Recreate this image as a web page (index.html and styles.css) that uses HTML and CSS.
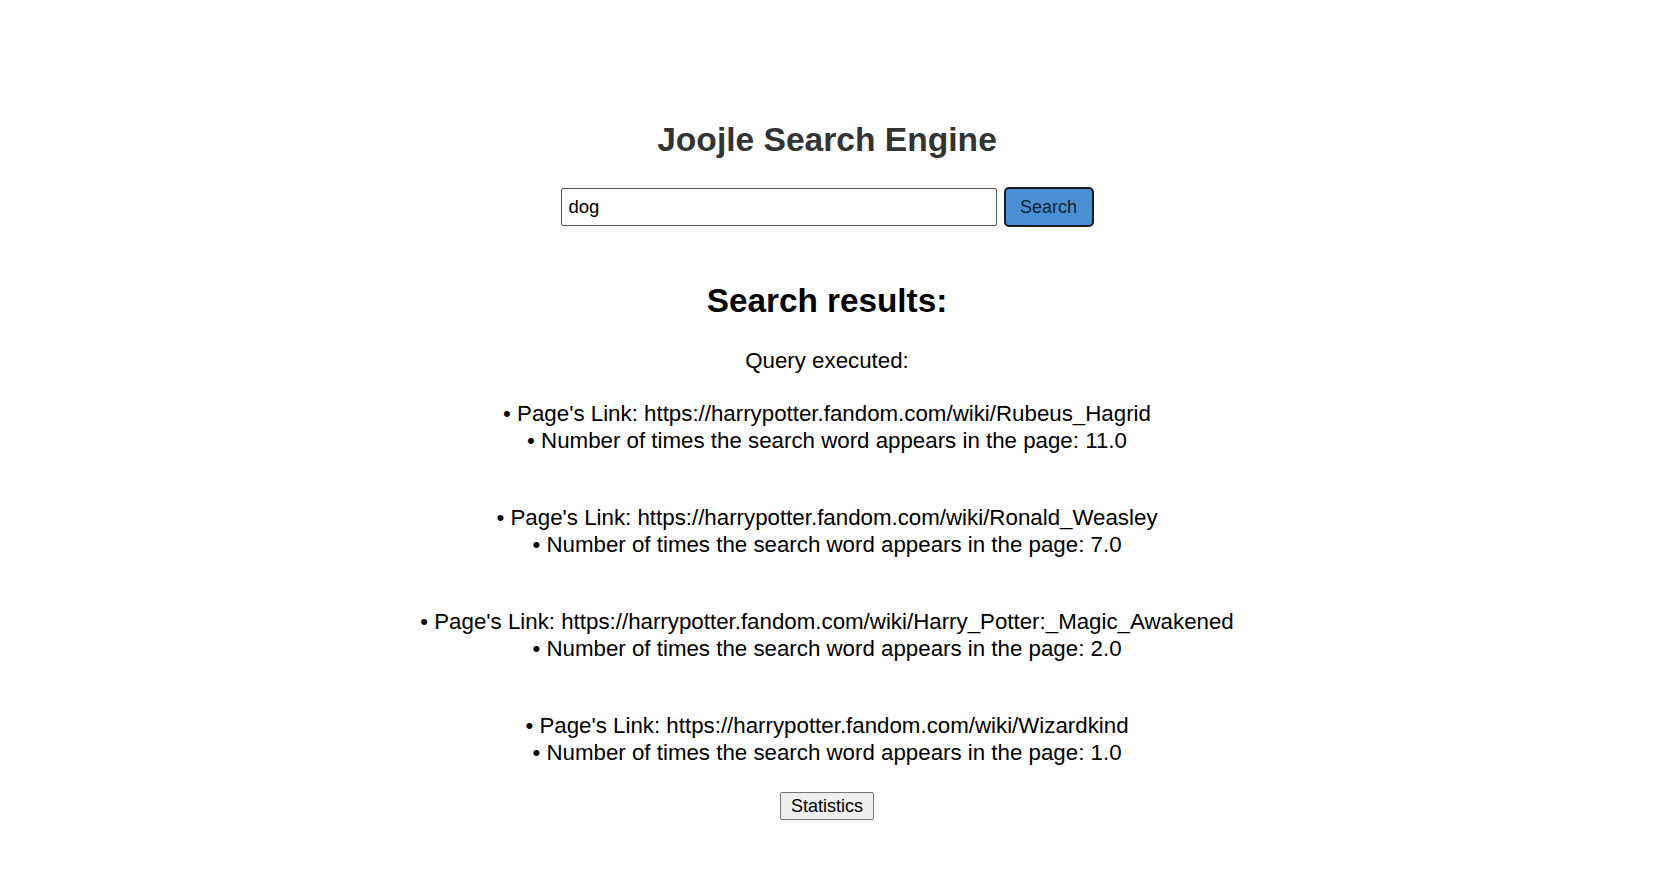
FILE: index.html
```html
<!DOCTYPE html>
<html lang="en">
<head>
<meta charset="utf-8">
<title>Joojle Search Engine</title>
<link rel="stylesheet" href="styles.css">
</head>
<body>
<main class="page">
  <h1 class="title">Joojle Search Engine</h1>
  <form class="search-form">
    <input class="search-input" type="text" value="dog">
    <button class="search-btn" type="button">Search</button>
  </form>
  <h2 class="results-title">Search results:</h2>
  <p class="query">Query executed:</p>
  <div class="results">
    <div class="result">
      <div class="line">• Page's Link: https://harrypotter.fandom.com/wiki/Rubeus_Hagrid</div>
      <div class="line">• Number of times the search word appears in the page: 11.0</div>
    </div>
    <div class="result">
      <div class="line">• Page's Link: https://harrypotter.fandom.com/wiki/Ronald_Weasley</div>
      <div class="line">• Number of times the search word appears in the page: 7.0</div>
    </div>
    <div class="result">
      <div class="line">• Page's Link: https://harrypotter.fandom.com/wiki/Harry_Potter:_Magic_Awakened</div>
      <div class="line">• Number of times the search word appears in the page: 2.0</div>
    </div>
    <div class="result">
      <div class="line">• Page's Link: https://harrypotter.fandom.com/wiki/Wizardkind</div>
      <div class="line">• Number of times the search word appears in the page: 1.0</div>
    </div>
  </div>
  <button class="stats-btn" type="button">Statistics</button>
</main>
</body>
</html>
```
FILE: styles.css
```css
html, body {
  margin: 0;
  padding: 0;
  background: #ffffff;
}
body {
  font-family: "Liberation Sans", Arial, sans-serif;
  color: #000;
}
.page {
  display: flex;
  flex-direction: column;
  align-items: center;
  text-align: center;
}
.title {
  margin: 121px 0 0;
  font-size: 33.6px;
  line-height: 38px;
  font-weight: bold;
  color: #333333;
}
.search-form {
  margin-top: 28px;
  display: flex;
  align-items: center;
  gap: 7px;
}
.search-input {
  box-sizing: border-box;
  width: 436px;
  height: 38px;
  margin: 0;
  padding: 0 7px;
  border: 1px solid #555555;
  border-radius: 2px;
  font-family: "Liberation Sans", Arial, sans-serif;
  font-size: 18.5px;
  color: #000;
  outline: none;
}
.search-btn {
  box-sizing: border-box;
  width: 90px;
  height: 40px;
  margin: 0;
  padding: 0;
  background: #4a8ed4;
  border: 2px solid #1c1c1c;
  border-radius: 5px;
  font-family: "Liberation Sans", Arial, sans-serif;
  font-size: 18px;
  color: #152233;
}
.results-title {
  margin: 55px 0 0;
  font-size: 33.3px;
  line-height: 38px;
  font-weight: bold;
}
.query {
  margin: 28px 0 0;
  font-size: 22.3px;
  line-height: 26px;
}
.results {
  margin-top: 26px;
  display: flex;
  flex-direction: column;
  gap: 50px;
}
.line {
  font-size: 22.3px;
  line-height: 27px;
}
.stats-btn {
  box-sizing: border-box;
  margin-top: 26px;
  width: 94px;
  height: 28px;
  padding: 0;
  background: #efefef;
  border: 1px solid #767676;
  border-radius: 2px;
  font-family: "Liberation Sans", Arial, sans-serif;
  font-size: 18px;
  color: #000;
}
```
